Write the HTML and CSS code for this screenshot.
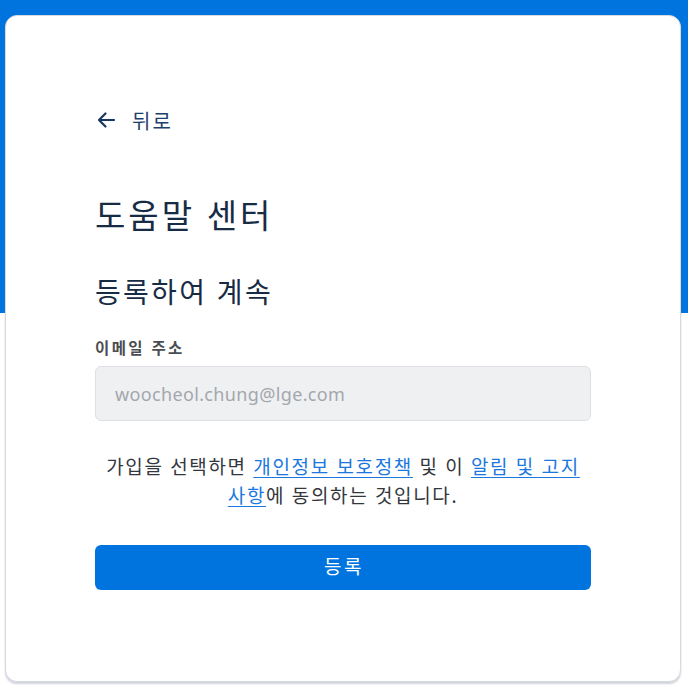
FILE: index.html
```html
<!DOCTYPE html>
<html lang="ko">
<head>
<meta charset="utf-8">
<title>도움말 센터</title>
<link rel="stylesheet" href="styles.css">
</head>
<body>
<div class="page">
  <main class="card">
    <a class="back" href="#">
      <svg class="back-icon" width="20" height="20" viewBox="0 0 20 20" aria-hidden="true">
        <path d="M18 10H3M9.5 3.5L3 10l6.5 6.5" fill="none" stroke="currentColor" stroke-width="2.2" stroke-linecap="round" stroke-linejoin="round"/>
      </svg>
      <span>뒤로</span>
    </a>
    <h1 class="title">도움말 센터</h1>
    <h2 class="subtitle">등록하여 계속</h2>
    <label class="label" for="email">이메일 주소</label>
    <div class="input" id="email">woocheol.chung@lge.com</div>
    <p class="terms">가입을 선택하면 <a href="#">개인정보 보호정책</a> 및 이 <a href="#">알림 및 고지 사항</a>에 동의하는 것입니다.</p>
    <button class="submit" type="button">등록</button>
  </main>
</div>
</body>
</html>
```
FILE: styles.css
```css
* { box-sizing: border-box; }
html, body { margin: 0; padding: 0; }
body {
  font-family: "Noto Sans", "Noto Sans CJK KR", sans-serif;
  background: linear-gradient(#0074de 0, #0074de 313px, #ffffff 313px);
  min-height: 692px;
}
.page {
  padding: 15px 7px 10px 5px;
}
.card {
  display: flex;
  flex-direction: column;
  width: 676px;
  height: 667px;
  background: #fff;
  border: 1px solid #d6dae0;
  border-radius: 12px;
  box-shadow: 0 2px 2px rgba(120, 130, 150, 0.35);
  padding: 90px 89px 0;
}
.back {
  display: flex;
  align-items: center;
  gap: 16px;
  height: 28px;
  color: #1e3f6e;
  text-decoration: none;
  font-size: 20px;
  letter-spacing: 2px;
  padding-left: 1px;
}
.back-icon { color: #17365f; }
.title {
  margin: 60px 0 0;
  font-size: 33px;
  line-height: 44px;
  font-weight: 400;
  letter-spacing: 3px;
  color: #172b45;
}
.subtitle {
  margin: 35px 0 0;
  font-size: 28px;
  line-height: 38px;
  font-weight: 400;
  letter-spacing: 2.3px;
  color: #172b45;
}
.label {
  margin-top: 27px;
  font-size: 15.5px;
  line-height: 20px;
  font-weight: 700;
  letter-spacing: 2.4px;
  color: #4a4d52;
}
.input {
  margin-top: 8px;
  height: 55px;
  background: #eff0f2;
  border: 1px solid #dde0e4;
  border-radius: 6px;
  padding: 0 19px;
  display: flex;
  align-items: center;
  font-size: 18px;
  letter-spacing: 0.35px;
  color: #a3a7ad;
}
.terms {
  margin: 32px 0 0;
  font-size: 19px;
  line-height: 29px;
  letter-spacing: 1.65px;
  text-align: center;
  color: #33373d;
}
.terms a {
  color: #1a78e0;
  text-decoration: underline;
  text-underline-offset: 3px;
}
.submit {
  margin-top: 34px;
  height: 45px;
  border: none;
  border-radius: 6px;
  background: #0074de;
  color: #fff;
  font-family: inherit;
  font-size: 19px;
  letter-spacing: 2.5px;
  padding: 0 0 3px 2px;
}
```
